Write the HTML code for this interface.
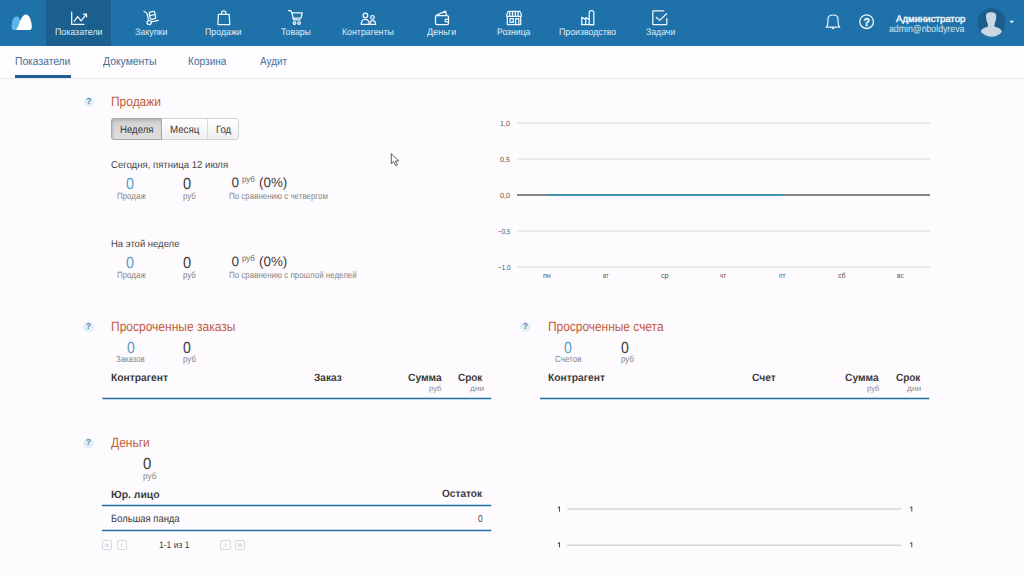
<!DOCTYPE html>
<html lang="ru"><head><meta charset="utf-8"><title>Показатели</title>
<style>
html,body{margin:0;padding:0;width:1024px;height:576px;overflow:hidden;background:#fdfbfd;font-family:"Liberation Sans",sans-serif;}
.t{position:absolute;white-space:nowrap;line-height:1;transform-origin:0 0;text-rendering:geometricPrecision;}
.abs{position:absolute;}
#hdr{position:absolute;left:0;top:0;width:1024px;height:46px;background:#1e72a9;}
#act{position:absolute;left:46px;top:0;width:65px;height:46px;background:#1b5f8f;}
#sub{position:absolute;left:0;top:46px;width:1024px;height:32px;background:#fefcfe;border-bottom:1px solid #eaeaec;}
#und{position:absolute;left:14.6px;top:75px;width:56.4px;height:3px;background:#1d5d94;}
.q{position:absolute;width:10.5px;height:10.5px;border-radius:50%;background:#e2eff8;}
.q b{position:absolute;left:0;top:-0.4px;width:10.5px;text-align:center;font:bold 8.5px/10px "Liberation Sans",sans-serif;color:#5c87aa;}
.btns{position:absolute;left:111px;top:117.5px;width:128px;height:22.5px;}
.btn{position:absolute;top:0;height:21px;border:1px solid #cfcfd2;background:linear-gradient(#ffffff,#ececee);}
.btn.on{background:linear-gradient(#d6d6d8,#e2e2e4);border-color:#a9a9ac;box-shadow:inset 0 1px 2px rgba(0,0,0,.18);}
.grid{position:absolute;left:517px;width:413px;height:2px;background:#e9e8ea;}
.tl{position:absolute;height:2px;background:#2c77aa;}
.pg{position:absolute;top:540.2px;width:8.4px;height:7.4px;border:1px solid #d8d8db;border-radius:2px;background:#fcfbfd;}
.pg i{position:absolute;left:0;top:0px;width:8.4px;text-align:center;font:normal 9px/9px "Liberation Sans",sans-serif;color:#c4c4c7;font-style:normal;}
</style></head>
<body>
<div id="hdr"></div>
<div id="act"></div>
<svg class="abs" style="left:0;top:0" width="720" height="46" viewBox="0 0 720 46">
 <!-- logo -->
 <path d="M13.6,29.9 C11.6,29.9 11.5,27.6 11.6,25.5 C11.9,20 13.6,16.5 16.3,16.5 C18.9,16.5 20.3,19.2 21.1,22.2 L17.2,29.9 Z" fill="#5ab7e7"/>
 <path d="M16,29.9 C18.4,27.2 19.6,21.4 21.6,18 C22.9,15.8 24.3,14.6 25.8,14.6 C29.6,14.6 31.6,21.2 31.8,26.5 C31.9,28.6 31.2,29.9 29.4,29.9 Z" fill="#ffffff"/>
 <g fill="none" stroke="#f2f7fb" stroke-width="1.25" stroke-linecap="round" stroke-linejoin="round">
  <!-- chart -->
  <path d="M71.7,12.1 V24.4 H84"/>
  <path d="M74.2,21.3 L77.6,16.7 L81.1,20.9 L86.2,14.4"/>
  <path d="M83.4,14.1 L86.4,14 L86.6,17"/>
  <!-- hand truck -->
  <path d="M143.9,11.3 C146,12.2 147.3,13.5 147.6,15.6 L148.4,20.4"/>
  <circle cx="149.2" cy="22.6" r="2.1"/>
  <path d="M151.3,21.9 L158.2,20.3"/>
  <rect x="149.6" y="11.6" width="5.6" height="7.4" rx="1.1" transform="rotate(-12 152.4 15.3)"/>
  <path d="M150,15.6 L155,14.5"/>
  <!-- bag -->
  <path d="M218.4,14.3 H229.2 L229.8,24.6 H217.9 Z"/>
  <path d="M221.6,14.3 V12.9 A2.1,2.1 0 0 1 225.8,12.9 V14.3"/>
  <!-- cart -->
  <path d="M288.4,10.7 H290.8 L291.9,12.9 H302.3 L300.9,18.2 H293.3"/>
  <path d="M291.9,12.9 L293.6,19.9 H300.2"/>
  <circle cx="294.5" cy="23.1" r="1.3"/>
  <circle cx="299.1" cy="23.1" r="1.3"/>
  <!-- people -->
  <circle cx="365.4" cy="15.4" r="2.3"/>
  <path d="M361.2,24.3 C361.2,21.2 363,19.3 365.2,19.3 C367.4,19.3 369.2,21.2 369.2,24.3 Z"/>
  <circle cx="372.5" cy="17.4" r="1.8"/>
  <path d="M370,24.3 C370,22.2 371.1,20.6 372.7,20.6 C374.3,20.6 375.6,22.2 375.6,24.3 Z"/>
  <!-- wallet -->
  <rect x="435.5" y="15.6" width="13" height="9" rx="1.4"/>
  <path d="M436.1,15.4 L445.5,11.1 L446.6,15.5"/>
  <path d="M448.5,19 H446.4 A1.4,1.4 0 0 0 446.4,21.8 H448.5"/>
  <!-- store -->
  <path d="M507.3,16.3 V24.6 H520.7 V16.3"/>
  <path d="M506.8,16.3 V14.2 L508.3,11.4 H519.8 L521.3,14.2 V16.3 Z"/>
  <path d="M509.8,11.6 V16 M512.5,11.6 V16 M515.3,11.6 V16 M518,11.6 V16"/>
  <rect x="510" y="18.6" width="3.3" height="3.8"/>
  <path d="M515.6,24.5 V18.6 H518.8 V24.5"/>
  <!-- production -->
  <path d="M581.8,24.5 V17.2 L585.7,19.4 M585.7,24.5 V17.5 L589.3,19.6"/>
  <path d="M589.2,24.5 V12.7 C589.2,10 593.8,10 593.8,12.7 V24.5 Z"/>
  <path d="M581.4,24.5 H593.8"/>
  <!-- tasks -->
  <path d="M663.8,10.9 H653.4 C652.9,10.9 652.8,11 652.8,11.5 V24.2 C652.8,24.6 652.9,24.7 653.4,24.7 H666.2 C666.6,24.7 666.8,24.6 666.8,24.2 V18.5"/>
  <path d="M656.2,17.3 L659.6,20.4 L666.6,13.8"/>
 </g>
</svg>
<svg class="abs" style="left:800px;top:0" width="224" height="46" viewBox="800 0 224 46">
 <g fill="none" stroke="#eef4f9" stroke-width="1.2" stroke-linejoin="round">
  <path d="M826.2,27.2 C827.6,25.8 828,24 828,21.5 V19 C828,16.6 830,15 833,15 C836,15 838,16.6 838,19 V21.5 C838,24 838.4,25.8 839.8,27.2 Z"/>
  <circle cx="866.6" cy="21.7" r="6.8" stroke-width="1.3"/>
 </g>
 <path d="M831.4,27.6 A1.6,1.6 0 0 0 834.6,27.6 Z" fill="#eef4f9"/>
 <text x="866.7" y="25.6" text-anchor="middle" font-family="Liberation Sans" font-weight="bold" font-size="10.5" fill="#eef4f9" stroke="#eef4f9" stroke-width="0.35">?</text>
 <circle cx="991.5" cy="22.5" r="14.2" fill="#1b5e8d"/>
 <clipPath id="av"><circle cx="991.5" cy="22.5" r="14.2"/></clipPath>
 <g clip-path="url(#av)" fill="#c9d7e2">
  <path d="M986,17 C985.6,13.6 987.6,12.2 991,12.2 C994.4,12.2 996.5,13.6 996.2,17 C996,19.4 995.6,22 994.6,23.8 L994.4,26.4 C997.6,27.4 1001,28.6 1001.6,31 L1002,37 H980.5 L981,31 C981.6,28.6 985,27.4 988,26.4 L987.8,23.8 C986.7,22 986.2,19.4 986,17 Z"/>
 </g>
 <path d="M1009.4,20.8 H1014.2 L1011.8,23.2 Z" fill="#eef4f9"/>
</svg>
<div id="sub"></div>
<div id="und"></div>

<!-- help circles -->
<div class="q" style="left:83.6px;top:96.5px"><b>?</b></div>
<div class="q" style="left:83.1px;top:321.8px"><b>?</b></div>
<div class="q" style="left:520.2px;top:321.8px"><b>?</b></div>
<div class="q" style="left:83.2px;top:437.6px"><b>?</b></div>

<!-- buttons -->
<div class="btns">
 <div class="abs" style="left:0;top:0;width:126px;height:20.5px;border:1px solid #d2d2d5;border-radius:3px;background:linear-gradient(#ffffff,#eeeeef);"></div>
 <div class="abs" style="left:0;top:0;width:48.5px;height:20.5px;border:1px solid #a8a8ab;border-radius:3px 0 0 3px;background:linear-gradient(#d3d3d5,#dfdfe1);box-shadow:inset 1px 2px 3px rgba(0,0,0,.15);"></div>
 <div class="abs" style="left:95.6px;top:1px;width:1px;height:20.5px;background:#dadadc;"></div>
</div>

<!-- chart -->
<div class="grid" style="top:122px"></div>
<div class="grid" style="top:158px"></div>
<div class="grid" style="top:230px"></div>
<div class="grid" style="top:266px"></div>
<div class="abs" style="left:517px;top:194px;width:413px;height:2px;background:#878787"></div>
<div class="abs" style="left:547px;top:194px;width:236px;height:2px;background:#4793ae"></div>

<!-- bottom chart -->
<svg class="abs" style="left:0;top:0" width="1024" height="576" viewBox="0 0 1024 576">
 <g fill="none" stroke="#4a4a4a" stroke-width="1" stroke-linejoin="round">
  <path d="M557.6,508 L559.5,506.8 V511.6"/>
  <path d="M557.6,543.7 L559.5,542.5 V547.3"/>
  <path d="M909.9,508 L911.8,506.8 V511.6"/>
  <path d="M909.9,543.7 L911.8,542.5 V547.3"/>
 </g>
 <g stroke="#d6d6d8" stroke-width="1.6">
  <line x1="567.2" y1="509" x2="901.5" y2="509"/>
  <line x1="567.2" y1="545.2" x2="901.5" y2="545.2"/>
 </g>
</svg>

<!-- table lines -->
<svg class="abs" style="left:0;top:0" width="1024" height="576" viewBox="0 0 1024 576">
 <g stroke="#226ea5" stroke-width="1.5">
  <line x1="102.4" y1="398.5" x2="491.3" y2="398.5"/>
  <line x1="540" y1="398.5" x2="929.3" y2="398.5"/>
  <line x1="102" y1="505.5" x2="491.3" y2="505.5"/>
  <line x1="102" y1="530.5" x2="491.3" y2="530.5"/>
 </g>
</svg>

<!-- pagination -->
<div class="pg" style="left:102px"><i>«</i></div>
<div class="pg" style="left:116.6px"><i>‹</i></div>
<div class="pg" style="left:220.4px"><i>›</i></div>
<div class="pg" style="left:234.6px"><i>»</i></div>

<span class="t" style="left:54.80px;top:28px;font-size:9.5px;color:#dfedf7;transform:scaleX(0.928);">Показатели</span>
<span class="t" style="left:134.80px;top:28px;font-size:9.5px;color:#dfedf7;transform:scaleX(0.935);">Закупки</span>
<span class="t" style="left:204.80px;top:28px;font-size:9.5px;color:#dfedf7;transform:scaleX(0.926);">Продажи</span>
<span class="t" style="left:280.60px;top:28px;font-size:9.5px;color:#dfedf7;transform:scaleX(0.913);">Товары</span>
<span class="t" style="left:342.30px;top:28px;font-size:9.5px;color:#dfedf7;transform:scaleX(0.925);">Контрагенты</span>
<span class="t" style="left:426.70px;top:28px;font-size:9.5px;color:#dfedf7;transform:scaleX(0.951);">Деньги</span>
<span class="t" style="left:497.20px;top:28px;font-size:9.5px;color:#dfedf7;transform:scaleX(0.909);">Розница</span>
<span class="t" style="left:558.90px;top:28px;font-size:9.5px;color:#dfedf7;transform:scaleX(0.924);">Производство</span>
<span class="t" style="left:645.50px;top:28px;font-size:9.5px;color:#dfedf7;transform:scaleX(0.918);">Задачи</span>
<span class="t" style="left:896.00px;top:15px;font-size:9.5px;color:#f2f6fa;transform:scaleX(1.012);-webkit-text-stroke:0.45px #f2f6fa;">Администратор</span>
<span class="t" style="left:889.40px;top:25px;font-size:10px;color:#d8e5ef;transform:scaleX(0.873);">admin@nboldyreva</span>
<span class="t" style="left:15.10px;top:57px;font-size:11.5px;color:#46709a;transform:scaleX(0.894);">Показатели</span>
<span class="t" style="left:102.70px;top:57px;font-size:11.5px;color:#46709a;transform:scaleX(0.903);">Документы</span>
<span class="t" style="left:188.40px;top:57px;font-size:11.5px;color:#46709a;transform:scaleX(0.878);">Корзина</span>
<span class="t" style="left:260.20px;top:57px;font-size:11.5px;color:#46709a;transform:scaleX(0.864);">Аудит</span>
<span class="t" style="left:110.61px;top:95px;font-size:13.5px;color:#c25b3e;transform:scaleX(0.886);">Продажи</span>
<span class="t" style="left:110.61px;top:320px;font-size:13.5px;color:#c25b3e;transform:scaleX(0.890);">Просроченные заказы</span>
<span class="t" style="left:548.12px;top:320px;font-size:13.5px;color:#c25b3e;transform:scaleX(0.883);">Просроченные счета</span>
<span class="t" style="left:110.50px;top:436px;font-size:13.5px;color:#c25b3e;transform:scaleX(0.889);">Деньги</span>
<span class="t" style="left:120.00px;top:125px;font-size:10.5px;color:#3b3b3b;transform:scaleX(0.916);">Неделя</span>
<span class="t" style="left:169.50px;top:125px;font-size:10.5px;color:#3b3b3b;transform:scaleX(0.923);">Месяц</span>
<span class="t" style="left:215.50px;top:125px;font-size:10.5px;color:#3b3b3b;transform:scaleX(0.904);">Год</span>
<span class="t" style="left:110.70px;top:161px;font-size:10px;color:#474747;transform:scaleX(0.956);">Сегодня, пятница 12 июля</span>
<span class="t" style="left:126.30px;top:177px;font-size:16px;color:#5a9dc0;transform:scaleX(0.900);">0</span>
<span class="t" style="left:183.00px;top:177px;font-size:16px;color:#3b3b3b;transform:scaleX(0.911);">0</span>
<span class="t" style="left:231.40px;top:176px;font-size:13.5px;color:#3b3b3b;">0</span>
<span class="t" style="left:242.20px;top:175px;font-size:8.5px;color:#666666;transform:scaleX(0.916);">руб</span>
<span class="t" style="left:258.80px;top:176px;font-size:13.5px;color:#3b3b3b;transform:scaleX(0.993);">(0%)</span>
<span class="t" style="left:116.60px;top:192px;font-size:9px;color:#858585;transform:scaleX(0.882);">Продаж</span>
<span class="t" style="left:183.10px;top:192px;font-size:9px;color:#858585;transform:scaleX(0.876);">руб</span>
<span class="t" style="left:229.00px;top:192px;font-size:9px;color:#858585;transform:scaleX(0.884);">По сравнению с четвергом</span>
<span class="t" style="left:110.70px;top:240px;font-size:10px;color:#474747;transform:scaleX(0.948);">На этой неделе</span>
<span class="t" style="left:126.30px;top:256px;font-size:16px;color:#5a9dc0;transform:scaleX(0.900);">0</span>
<span class="t" style="left:183.00px;top:256px;font-size:16px;color:#3b3b3b;transform:scaleX(0.911);">0</span>
<span class="t" style="left:231.40px;top:255px;font-size:13.5px;color:#3b3b3b;">0</span>
<span class="t" style="left:242.20px;top:254px;font-size:8.5px;color:#666666;transform:scaleX(0.916);">руб</span>
<span class="t" style="left:258.80px;top:255px;font-size:13.5px;color:#3b3b3b;transform:scaleX(0.993);">(0%)</span>
<span class="t" style="left:116.60px;top:271px;font-size:9px;color:#858585;transform:scaleX(0.882);">Продаж</span>
<span class="t" style="left:183.10px;top:271px;font-size:9px;color:#858585;transform:scaleX(0.876);">руб</span>
<span class="t" style="left:229.00px;top:271px;font-size:9px;color:#858585;transform:scaleX(0.884);">По сравнению с прошлой неделей</span>
<span class="t" style="left:126.50px;top:341px;font-size:16px;color:#5a9dc0;transform:scaleX(0.878);">0</span>
<span class="t" style="left:183.00px;top:341px;font-size:16px;color:#3b3b3b;transform:scaleX(0.878);">0</span>
<span class="t" style="left:116.20px;top:355px;font-size:9px;color:#858585;transform:scaleX(0.862);">Заказов</span>
<span class="t" style="left:183.00px;top:355px;font-size:9px;color:#858585;transform:scaleX(0.882);">руб</span>
<span class="t" style="left:110.70px;top:373px;font-size:10.5px;color:#3b3b3b;font-weight:700;transform:scaleX(0.979);">Контрагент</span>
<span class="t" style="left:313.60px;top:373px;font-size:10.5px;color:#3b3b3b;font-weight:700;transform:scaleX(0.967);">Заказ</span>
<span class="t" style="left:407.50px;top:373px;font-size:10.5px;color:#3b3b3b;font-weight:700;transform:scaleX(0.978);">Сумма</span>
<span class="t" style="left:458.20px;top:373px;font-size:10.5px;color:#3b3b3b;font-weight:700;transform:scaleX(0.947);">Срок</span>
<span class="t" style="left:429.00px;top:385px;font-size:8px;color:#8a8a8a;transform:scaleX(0.952);">руб</span>
<span class="t" style="left:469.50px;top:385px;font-size:8px;color:#8a8a8a;transform:scaleX(1.047);">дни</span>
<span class="t" style="left:564.00px;top:341px;font-size:16px;color:#5a9dc0;transform:scaleX(0.878);">0</span>
<span class="t" style="left:620.50px;top:341px;font-size:16px;color:#3b3b3b;transform:scaleX(0.878);">0</span>
<span class="t" style="left:554.80px;top:355px;font-size:9px;color:#858585;transform:scaleX(0.892);">Счетов</span>
<span class="t" style="left:620.50px;top:355px;font-size:9px;color:#858585;transform:scaleX(0.882);">руб</span>
<span class="t" style="left:548.20px;top:373px;font-size:10.5px;color:#3b3b3b;font-weight:700;transform:scaleX(0.979);">Контрагент</span>
<span class="t" style="left:751.50px;top:373px;font-size:10.5px;color:#3b3b3b;font-weight:700;transform:scaleX(0.974);">Счет</span>
<span class="t" style="left:845.00px;top:373px;font-size:10.5px;color:#3b3b3b;font-weight:700;transform:scaleX(0.978);">Сумма</span>
<span class="t" style="left:895.70px;top:373px;font-size:10.5px;color:#3b3b3b;font-weight:700;transform:scaleX(0.947);">Срок</span>
<span class="t" style="left:866.50px;top:385px;font-size:8px;color:#8a8a8a;transform:scaleX(0.952);">руб</span>
<span class="t" style="left:907.00px;top:385px;font-size:8px;color:#8a8a8a;transform:scaleX(1.047);">дни</span>
<span class="t" style="left:142.75px;top:457px;font-size:16px;color:#3b3b3b;transform:scaleX(0.928);">0</span>
<span class="t" style="left:142.75px;top:472px;font-size:9px;color:#858585;transform:scaleX(0.913);">руб</span>
<span class="t" style="left:110.50px;top:490px;font-size:10.5px;color:#3b3b3b;font-weight:700;transform:scaleX(0.989);">Юр. лицо</span>
<span class="t" style="left:442.20px;top:489px;font-size:10.5px;color:#3b3b3b;font-weight:700;transform:scaleX(0.960);">Остаток</span>
<span class="t" style="left:110.50px;top:514px;font-size:10.5px;color:#3b3b3b;transform:scaleX(0.900);">Большая панда</span>
<span class="t" style="left:478.30px;top:515px;font-size:10px;color:#3b3b3b;transform:scaleX(0.833);">0</span>
<span class="t" style="left:158.60px;top:541px;font-size:9.5px;color:#404040;transform:scaleX(0.897);">1-1 из 1</span>
<span class="t" style="left:500.20px;top:120px;font-size:7.4px;color:#555555;transform:scaleX(0.964);">1,0</span>
<span class="t" style="left:500.20px;top:156px;font-size:7.4px;color:#555555;transform:scaleX(0.964);">0,5</span>
<span class="t" style="left:500.20px;top:192px;font-size:7.4px;color:#555555;transform:scaleX(0.964);">0,0</span>
<span class="t" style="left:497.60px;top:228px;font-size:7.4px;color:#555555;transform:scaleX(0.856);">−0,5</span>
<span class="t" style="left:497.60px;top:264px;font-size:7.4px;color:#555555;transform:scaleX(0.856);">−1,0</span>
<span class="t" style="left:543.00px;top:272px;font-size:7.4px;color:#555555;transform:scaleX(0.962);">пн</span>
<span class="t" style="left:602.70px;top:272px;font-size:7.4px;color:#555555;transform:scaleX(0.773);">вт</span>
<span class="t" style="left:661.00px;top:272px;font-size:7.4px;color:#555555;transform:scaleX(0.975);">ср</span>
<span class="t" style="left:720.00px;top:272px;font-size:7.4px;color:#555555;transform:scaleX(0.853);">чт</span>
<span class="t" style="left:779.00px;top:272px;font-size:7.4px;color:#555555;transform:scaleX(0.862);">пт</span>
<span class="t" style="left:837.50px;top:272px;font-size:7.4px;color:#555555;transform:scaleX(0.949);">сб</span>
<span class="t" style="left:896.80px;top:272px;font-size:7.4px;color:#555555;transform:scaleX(0.880);">вс</span>

<!-- cursor -->
<svg class="abs" style="left:390px;top:152px" width="14" height="18" viewBox="0 0 14 18">
 <path d="M1.3,1.7 V11.7 L3.7,9.6 L5.6,13.6 L7.3,12.8 L5.5,9 L8.7,8.9 Z" fill="#ffffff" stroke="#444" stroke-width="0.85" stroke-linejoin="round"/>
</svg>
</body></html>
